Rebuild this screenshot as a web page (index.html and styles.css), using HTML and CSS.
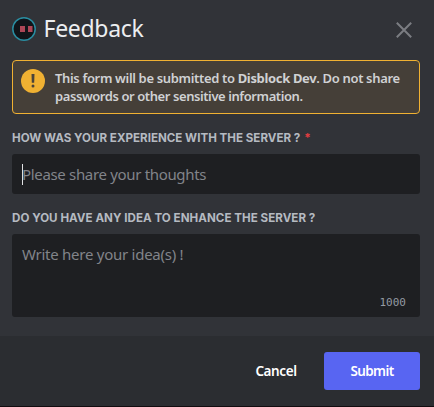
FILE: index.html
```html
<!DOCTYPE html>
<html lang="en">
<head>
<meta charset="utf-8">
<title>Feedback</title>
<link rel="stylesheet" href="styles.css">
</head>
<body>
<main class="modal">
  <header class="header">
    <svg class="avatar" viewBox="0 0 24 24"><circle cx="12" cy="12" r="11.2" fill="#111419" stroke="#2a8da1" stroke-width="1.5"/><path d="M8 9h5v6H8zM16 9h4.5v6H16z" fill="#ad4657"/></svg>
    <h1 class="title">Feedback</h1>
    <svg class="close" viewBox="0 0 16 16"><path d="M.8.8l14.4 14.4M15.2.8L.8 15.2" stroke="#7b7d82" stroke-width="2"/></svg>
  </header>
  <section class="notice">
    <svg class="warn" viewBox="0 0 24 24"><circle cx="12" cy="12" r="12" fill="#f0b132"/><path d="M10.5 5h3l-.3 8.8h-2.4z" fill="#49433a"/><circle cx="12" cy="16.9" r="1.5" fill="#49433a"/></svg>
    <p class="notice-text"><span class="line first">This form will be submitted to <strong>Disblock Dev</strong>. Do not share</span><span class="line second">passwords or other sensitive information.</span></p>
  </section>
  <section class="field">
    <div class="label"><span class="label-one">HOW WAS YOUR EXPERIENCE WITH THE SERVER ?</span><span class="required">*</span></div>
    <div class="input"><span class="caret"></span><span class="placeholder-one">Please share your thoughts</span></div>
  </section>
  <section class="field">
    <div class="label"><span class="label-two">DO YOU HAVE ANY IDEA TO ENHANCE THE SERVER ?</span></div>
    <div class="input area"><span class="placeholder-two">Write here your idea(s) !</span><span class="count">1000</span></div>
  </section>
  <footer class="footer">
    <button class="button cancel">Cancel</button>
    <button class="button submit">Submit</button>
  </footer>
</main>
</body>
</html>
```
FILE: styles.css
```css
* { box-sizing: border-box; }
body { margin: 0; background: #120c10; font-family: "Noto Sans", sans-serif; overflow: hidden; }
.modal { width: 434px; height: 406px; background: #313338; display: flex; flex-direction: column; white-space: nowrap; }
.header { height: 60px; padding: 0 22px 0 12px; display: flex; align-items: center; }
.avatar { width: 24px; height: 24px; margin-top: -2px; }
.title { margin: -4px 0 0 7.5px; font-size: 23px; line-height: 30px; font-weight: 400; letter-spacing: -.3px; color: #eceef0; }
.close { width: 16px; height: 16px; margin-left: auto; }
.notice { height: 54px; margin: 0 14px 0 12px; padding: 8px; border: 1px solid #f0b132; border-radius: 4px; background: #453f38; display: flex; }
.warn { width: 24px; height: 24px; flex: none; }
.notice-text { margin: 0 0 0 10px; font-size: 13px; line-height: 18px; font-weight: 600; color: #d0d1d3; }
.line { display: block; }
.first { letter-spacing: -.34px; }
.second { letter-spacing: -.42px; }
.notice-text strong { font-weight: 700; }
.field { padding: 16px 14px 0 12px; }
.label { height: 16px; margin-bottom: 8px; display: flex; font-family: Inter, sans-serif; font-size: 11.6px; line-height: 17px; font-weight: 700; color: #b5bac1; }
.label-two { letter-spacing: .03px; }
.required { margin-left: 4px; color: #e03d40; }
.input { height: 40px; padding: 10px; border-radius: 3px; background: #1e1f22; display: flex; align-items: center; font-size: 15px; line-height: 20px; letter-spacing: -.33px; color: #82848a; }
.caret { width: 1px; height: 21px; margin-right: -1px; background: #e0e1e3; }
.placeholder-two { letter-spacing: -.26px; }
.area { height: 83px; padding: 10px 14px 7px 10px; flex-direction: column; align-items: flex-start; justify-content: space-between; }
.count { align-self: flex-end; margin-bottom: -1px; font: 11px/16px "DejaVu Sans Mono", monospace; letter-spacing: 0; color: #949ba4; }
.footer { height: 70px; margin-top: auto; padding: 16px 14px 16px 0; background: #2b2d31; display: flex; justify-content: flex-end; }
.button { height: 38px; padding: 0; border: 0; border-radius: 3px; color: #fff; font: 600 13.5px/20px "Noto Sans", sans-serif; letter-spacing: -.4px; }
.cancel { width: 96px; background: transparent; }
.submit { width: 96px; background: #5865f2; letter-spacing: -.6px; }
```
